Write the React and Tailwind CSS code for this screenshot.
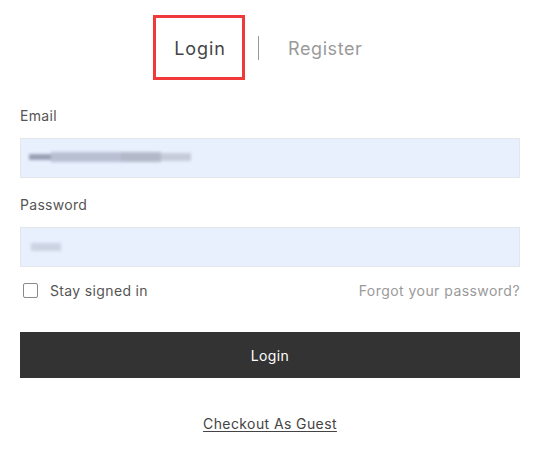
export default function App() {
  const font = { fontFamily: '"Inter", "Open Sans", sans-serif' };
  return (
    <div className="w-[537px] h-[467px] bg-white text-[#333]" style={font}>
      <div className="flex items-center pt-[15px] pl-[153px]">
        <div className="w-[92px] h-[65px] border-[3px] border-[#f03a3a] flex items-center justify-center">
          <span className="text-[18px] text-[#444] tracking-[0.9px] pl-[2px] pt-[1px]">Login</span>
        </div>
        <div className="ml-[13px] w-px h-[24px] bg-[#999]"></div>
        <span className="ml-[29px] text-[18px] text-[#9a9a9a] tracking-[0.6px] pt-[1px]">Register</span>
      </div>
      <div className="px-[20px] pr-[17px]">
        <div className="mt-[27px] text-[14px] text-[#555] leading-[18px] tracking-[0.3px]">Email</div>
        <div className="mt-[13px] h-[40px] bg-[#e8f0fe] border border-[#e3e6ea] relative overflow-hidden">
          <div className="absolute left-[8px] top-[13px] flex items-center blur-[1.5px]">
            <div className="w-[22px] h-[6px] bg-[#9aa0b5]"></div>
            <div className="w-[70px] h-[10px] bg-[#b9c0d2]"></div>
            <div className="w-[40px] h-[10px] bg-[#b3b9c9]"></div>
            <div className="w-[30px] h-[8px] bg-[#c7ccd9]"></div>
          </div>
        </div>
        <div className="mt-[18px] text-[14px] text-[#555] leading-[18px] tracking-[0.3px]">Password</div>
        <div className="mt-[13px] h-[40px] bg-[#e8f0fe] border border-[#e3e6ea] relative overflow-hidden">
          <div className="absolute left-[10px] top-[15px] flex items-center blur-[1.5px]">
            <div className="w-[30px] h-[8px] bg-[#ccd3e2]"></div>
          </div>
        </div>
        <div className="mt-[13px] flex items-center justify-between">
          <div className="flex items-center">
            <div className="ml-[3px] w-[15px] h-[15px] border border-[#8a8a8a] rounded-[2px] bg-white"></div>
            <span className="ml-[12px] text-[14px] text-[#555] tracking-[0.35px]">Stay signed in</span>
          </div>
          <span className="text-[14px] text-[#9a9a9a] tracking-[0.45px]">Forgot your password?</span>
        </div>
        <button className="mt-[31px] w-full h-[46px] bg-[#333333] text-white text-[14px] tracking-[0.4px] flex items-center justify-center">
          Login
        </button>
        <div className="mt-[33px] text-center">
          <span className="text-[14px] text-[#444] underline underline-offset-2 tracking-[0.4px]">Checkout As Guest</span>
        </div>
      </div>
    </div>
  );
}
